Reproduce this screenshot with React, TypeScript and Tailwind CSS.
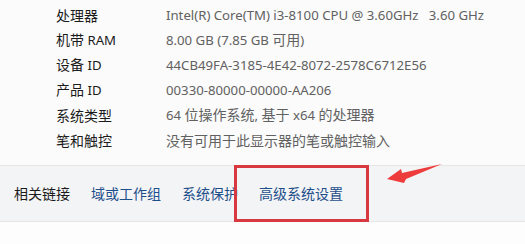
const rows: [string, string][] = [
  ["处理器", "Intel(R) Core(TM) i3-8100 CPU @ 3.60GHz   3.60 GHz"],
  ["机带 RAM", "8.00 GB (7.85 GB 可用)"],
  ["设备 ID", "44CB49FA-3185-4E42-8072-2578C6712E56"],
  ["产品 ID", "00330-80000-00000-AA206"],
  ["系统类型", "64 位操作系统, 基于 x64 的处理器"],
  ["笔和触控", "没有可用于此显示器的笔或触控输入"],
];

const links = ["域或工作组", "系统保护", "高级系统设置"];

// latin runs are set a bit smaller so they match Segoe widths
function Mixed({ text }: { text: string }) {
  const parts = text.match(/[\u3000-\u9fff]+|[^\u3000-\u9fff]+/g) ?? [];
  return (
    <>
      {parts.map((p, i) =>
        /[\u3000-\u9fff]/.test(p) ? (
          <span key={i}>{p}</span>
        ) : (
          <span key={i} className="text-[13.2px]">
            {p}
          </span>
        )
      )}
    </>
  );
}

export default function App() {
  return (
    <div
      className="relative w-[525px] h-[244px] overflow-hidden bg-[#fbfbfb] text-[14px]"
      style={{ fontFamily: '"Noto Sans", "Noto Sans CJK SC", sans-serif' }}
    >
      <div className="flex flex-col pt-[3px] pl-[56px]">
        {rows.map(([k, v]) => (
          <div key={k} className="flex items-center h-[25px] leading-none">
            <span className="w-[110px] text-[#1b1b1b]">
              <Mixed text={k} />
            </span>
            <span className="text-[#616161] whitespace-pre">
              <Mixed text={v} />
            </span>
          </div>
        ))}
      </div>

      <div className="mt-[12px] h-[57px] flex items-center gap-[21px] pl-[14px] bg-[#f3f4f6] border-y border-[#e6e6e6]">
        <span className="text-[#1b1b1b]">相关链接</span>
        {links.map((l) => (
          <span key={l} className="text-[#1c4e8a]">
            {l}
          </span>
        ))}
      </div>
      <div className="h-full bg-[#fdfdfd]" />

      <div className="absolute left-[234px] top-[165px] w-[135px] h-[57px] border-[3px] border-[#d8383f]" />

      <svg className="absolute left-[380px] top-[160px]" width="70" height="30" viewBox="0 0 70 30">
        <path d="M7 19 L21 9 L22 13 L62 4 L26 19 L24 23 Z" fill="#ee3b3b" />
      </svg>
    </div>
  );
}
